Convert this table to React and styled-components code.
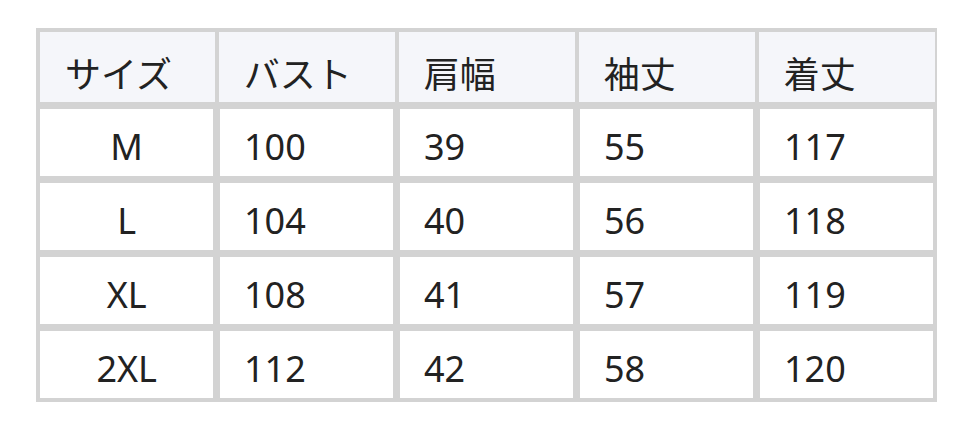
import React from "react";
import styled, { createGlobalStyle } from "styled-components";

const GlobalStyle = createGlobalStyle`
  html, body {
    margin: 0;
    padding: 0;
    background: #ffffff;
  }
  body {
    font-family: "Noto Sans", "Noto Sans CJK JP", sans-serif;
    color: #222222;
  }
`;

const Page = styled.div`
  padding: 28px 0 0 36px;
`;

const Grid = styled.div`
  display: grid;
  grid-template-columns: repeat(5, 1fr);
  grid-template-rows: 70px repeat(4, 67.3px);
  gap: 6.67px;
  width: 901.3px;
  box-sizing: border-box;
  padding: 4px;
  background: #d3d3d3;
`;

const HeadCell = styled.div`
  display: flex;
  align-items: center;
  background: #f5f6fa;
  margin: 0 -1.33px;
  padding: 9px 0 0 25px;
  font-size: 36px;
  line-height: 1;
  font-family: "Noto Sans CJK JP", "Noto Sans", sans-serif;
  &:first-child {
    margin-left: 0;
  }
  &:last-child {
    margin-right: 0;
  }
`;

const Cell = styled.div`
  display: flex;
  align-items: center;
  justify-content: ${(p) => (p.$center ? "center" : "flex-start")};
  background: #ffffff;
  padding: 9px 0 0 ${(p) => (p.$center ? "0" : "24px")};
  font-size: 36px;
  line-height: 1;
`;

const headers = ["サイズ", "バスト", "肩幅", "袖丈", "着丈"];

const rows = [
  ["M", "100", "39", "55", "117"],
  ["L", "104", "40", "56", "118"],
  ["XL", "108", "41", "57", "119"],
  ["2XL", "112", "42", "58", "120"],
];

export default function App() {
  return (
    <>
      <GlobalStyle />
      <Page>
        <Grid>
          {headers.map((h) => (
            <HeadCell key={h}>{h}</HeadCell>
          ))}
          {rows.map((row) =>
            row.map((v, i) => (
              <Cell key={row[0] + i} $center={i === 0}>
                {v}
              </Cell>
            ))
          )}
        </Grid>
      </Page>
    </>
  );
}
